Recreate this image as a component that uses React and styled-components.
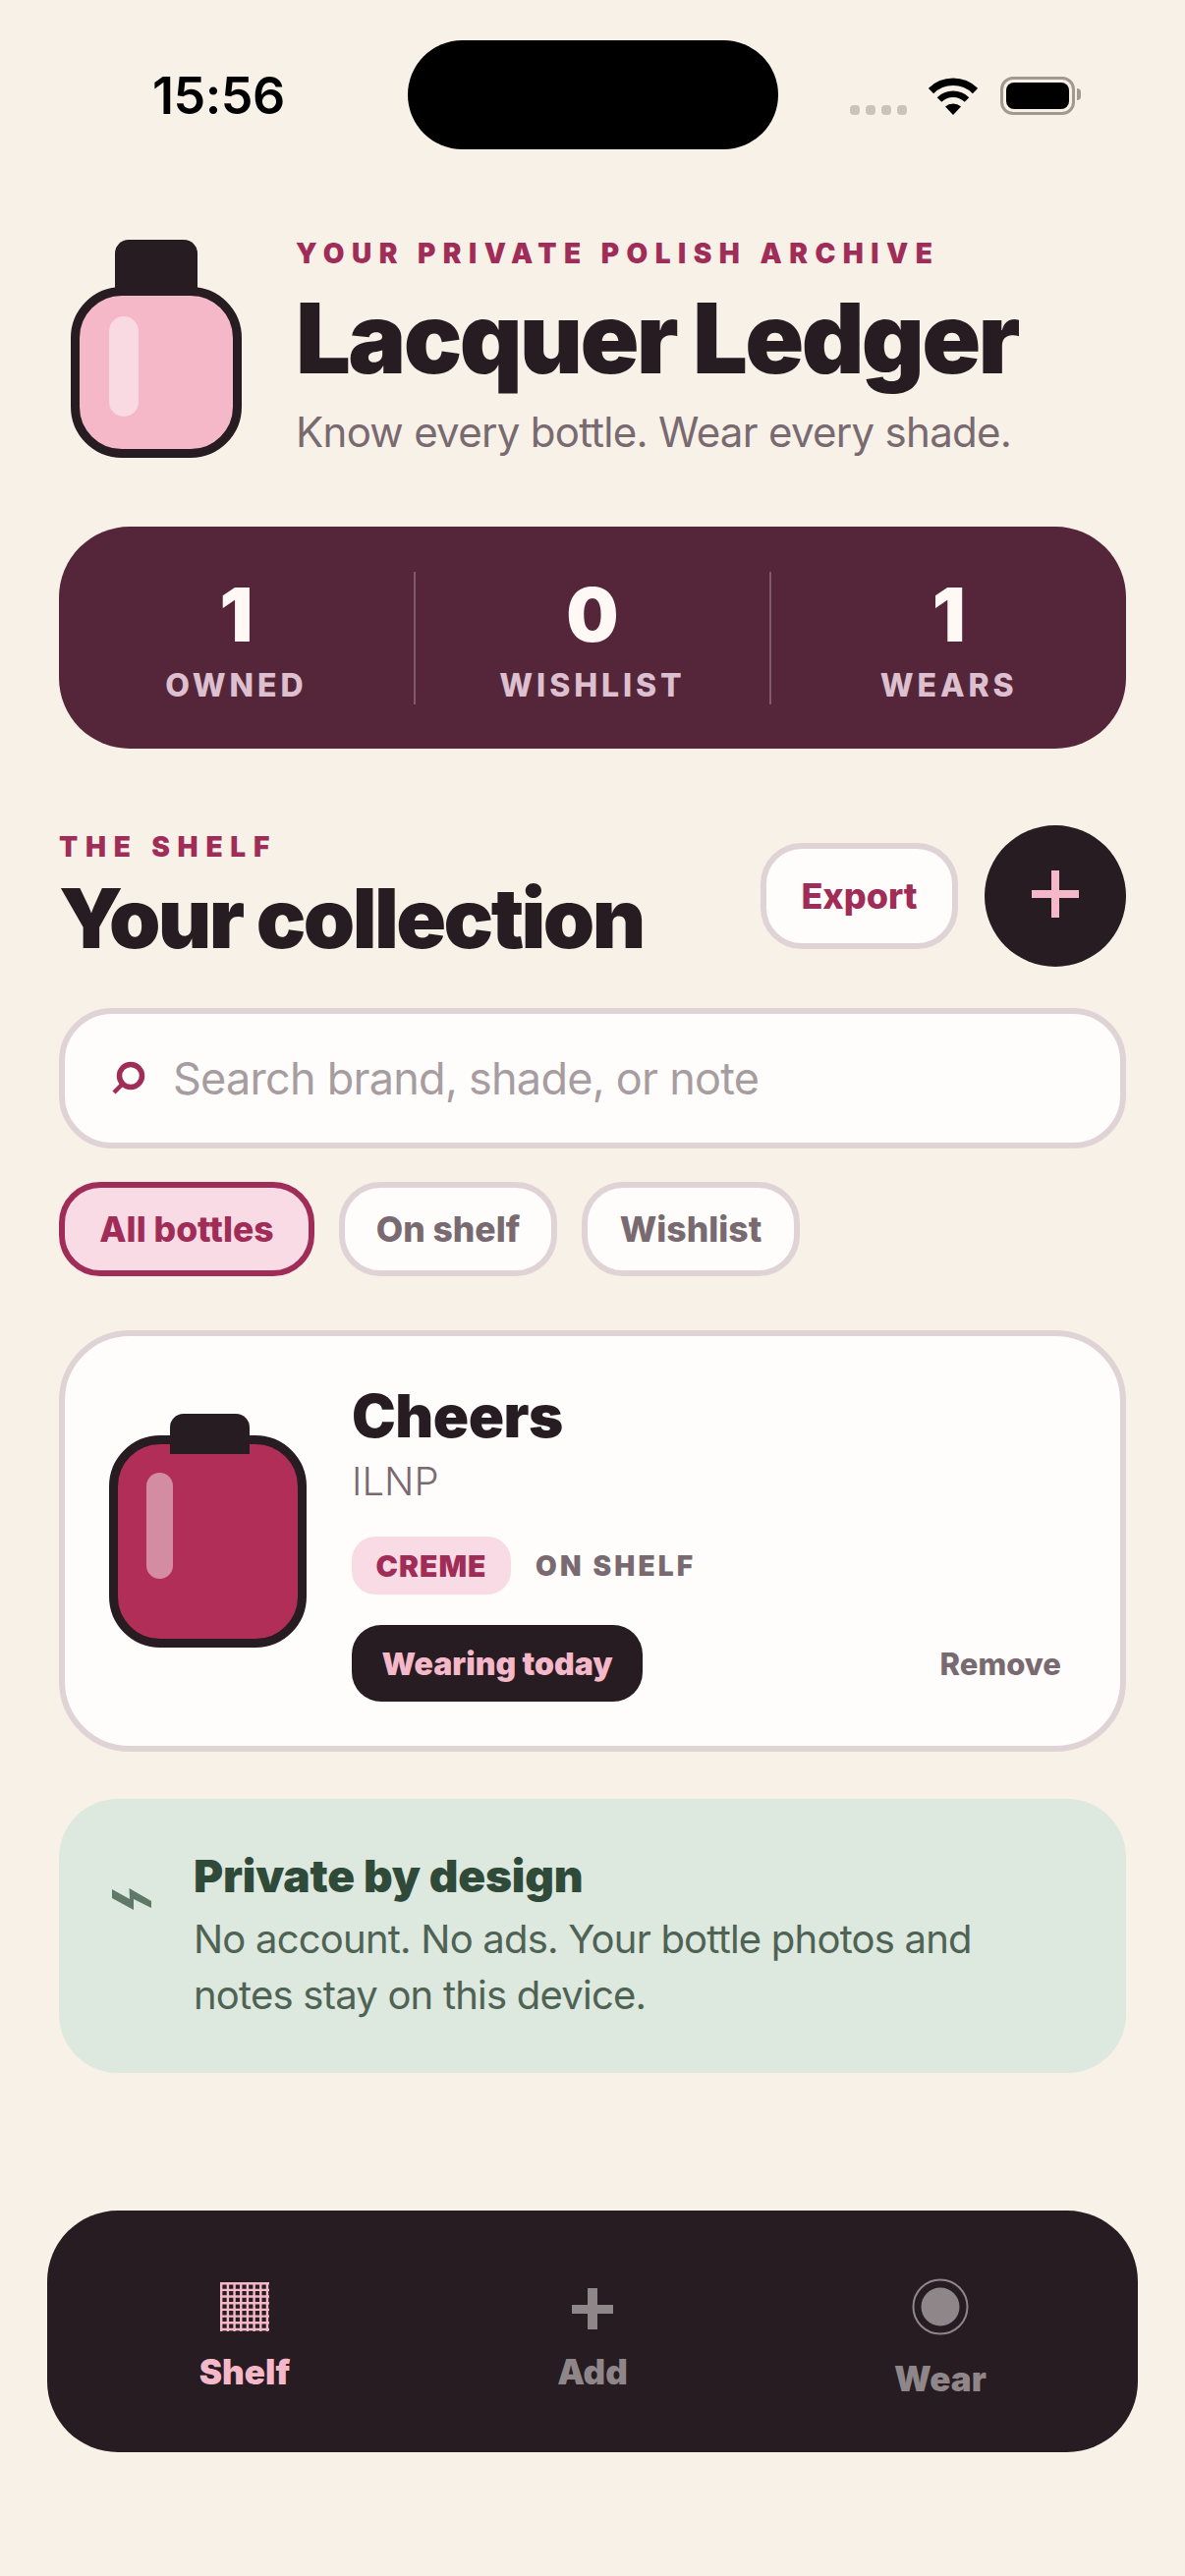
import React from 'react';
import styled, { createGlobalStyle } from 'styled-components';

const GlobalStyle = createGlobalStyle`
  html, body {
    margin: 0;
    padding: 0;
    background: #f8f1e7;
  }
  body {
    font-family: Inter, "Noto Sans", sans-serif;
    color: #261c21;
  }
`;

const Screen = styled.div`
  width: 1206px;
  height: 2622px;
  overflow: hidden;
  background: #f8f1e7;
`;

/* status bar */
const StatusBar = styled.div`
  display: grid;
  grid-template-columns: 1fr 377px 1fr;
  padding-top: 41px;
  height: 111px;
`;

const Time = styled.div`
  padding: 39px 0 0 155px;
  font-size: 52px;
  line-height: 36px;
  font-weight: 600;
  color: #000;
  letter-spacing: -0.5px;
`;

const Island = styled.div`
  background: #000;
  height: 111px;
  border-radius: 56px;
`;

const StatusIcons = styled.div`
  display: flex;
  align-items: flex-end;
  height: 76px;
  padding-left: 73px;
`;

const SignalDots = styled.div`
  display: flex;
  gap: 6px;
  margin-right: 22px;
`;

const SignalDot = styled.span`
  width: 10px;
  height: 10px;
  border-radius: 4px;
  background: #c9c4bc;
`;

const Battery = styled.div`
  position: relative;
  box-sizing: border-box;
  width: 76px;
  height: 39px;
  margin-left: 23px;
  padding: 3px;
  border: 3px solid #a09a90;
  border-radius: 13px;
  &::before {
    content: '';
    display: block;
    height: 100%;
    background: #000;
    border-radius: 8px;
  }
  &::after {
    content: '';
    position: absolute;
    right: -9px;
    top: 9px;
    width: 4px;
    height: 12px;
    background: #a09a90;
    border-radius: 0 4px 4px 0;
  }
`;

/* header */
const Content = styled.main`
  padding: 0 60px;
`;

const Header = styled.header`
  display: flex;
  gap: 55px;
  margin-top: 92px;
  padding-left: 12px;
`;

const BottleWrap = styled.div`
  position: relative;
  flex: none;
  box-sizing: border-box;
  width: ${(p) => p.$w}px;
  height: ${(p) => p.$h}px;
  padding-top: ${(p) => p.$capDrop}px;
`;

const BottleCap = styled.div`
  position: absolute;
  top: 0;
  left: ${(p) => p.$left}px;
  z-index: ${(p) => (p.$front ? 1 : 0)};
  width: ${(p) => p.$w}px;
  height: ${(p) => p.$h}px;
  background: #261c21;
  border-radius: ${(p) => p.$radius};
`;

const BottleBody = styled.div`
  position: relative;
  box-sizing: border-box;
  height: 100%;
  background: ${(p) => p.$color};
  border: 9px solid #261c21;
  border-radius: 52px;
`;

const BottleShine = styled.div`
  position: absolute;
  top: ${(p) => p.$top}px;
  left: ${(p) => p.$left}px;
  width: ${(p) => p.$w}px;
  height: ${(p) => p.$h}px;
  background: rgba(255, 255, 255, ${(p) => p.$alpha});
  border-radius: 20px;
`;

const Eyebrow = styled.div`
  font-size: 28px;
  line-height: 28px;
  font-weight: 900;
  letter-spacing: ${(p) => p.$spacing}px;
  color: #a02c58;
`;

const Title = styled.h1`
  margin: 22px 0 0;
  font-size: 99px;
  line-height: 100px;
  font-weight: 900;
  letter-spacing: -2.7px;
  white-space: nowrap;
`;

const Tagline = styled.p`
  margin: 21px 0 0;
  font-size: 42px;
  line-height: 50px;
  font-weight: 400;
  letter-spacing: -0.7px;
  color: #786a70;
  white-space: nowrap;
`;

/* stats */
const Stats = styled.section`
  display: flex;
  align-items: center;
  margin-top: 70px;
  height: 226px;
  background: #552539;
  border-radius: 72px;
`;

const Stat = styled.div`
  flex: 1;
  height: 135px;
  text-align: center;
  & + & {
    border-left: 2px solid rgba(255, 255, 255, 0.25);
  }
`;

const StatNumber = styled.div`
  padding-top: 5px;
  font-size: 75px;
  line-height: 78px;
  font-weight: 900;
  color: #fff8f4;
`;

const StatLabel = styled.div`
  margin-top: 15px;
  font-size: 32px;
  line-height: 36px;
  font-weight: 800;
  letter-spacing: 3.9px;
  color: #dcc0cf;
`;

/* section head */
const SectionHead = styled.section`
  display: flex;
  align-items: center;
  justify-content: space-between;
  margin-top: 78px;
`;

const SectionTitle = styled.h2`
  margin: 17px 0 0;
  font-size: 84px;
  line-height: 84px;
  font-weight: 900;
  letter-spacing: -2.6px;
  white-space: nowrap;
`;

const HeadActions = styled.div`
  display: flex;
  align-items: center;
  gap: 27px;
`;

const ExportButton = styled.button`
  box-sizing: border-box;
  width: 201px;
  height: 108px;
  padding: 0;
  background: #fffdfb;
  border: 6px solid #dfd3d6;
  border-radius: 42px;
  font-family: inherit;
  font-size: 36px;
  font-weight: 800;
  color: #a02c58;
`;

const AddButton = styled.button`
  display: flex;
  align-items: center;
  justify-content: center;
  width: 144px;
  height: 144px;
  padding: 0 0 4px;
  background: #261c21;
  border: 0;
  border-radius: 50%;
`;

/* search */
const Search = styled.div`
  box-sizing: border-box;
  display: flex;
  align-items: center;
  gap: 27px;
  height: 143px;
  margin-top: 42px;
  padding-left: 47px;
  background: #fffdfb;
  border: 6px solid #dfd3d6;
  border-radius: 54px;
`;

const SearchText = styled.span`
  font-size: 45px;
  font-weight: 400;
  letter-spacing: -0.75px;
  color: #a79ca0;
`;

/* filters */
const Filters = styled.div`
  display: flex;
  gap: 25px;
  margin-top: 34px;
`;

const Chip = styled.button`
  box-sizing: border-box;
  width: ${(p) => p.$w}px;
  height: 96px;
  padding: 0;
  background: ${(p) => (p.$active ? '#f8dbe5' : '#fffdfb')};
  border: 6px solid ${(p) => (p.$active ? '#a02c58' : '#dfd3d6')};
  border-radius: 42px;
  font-family: inherit;
  font-size: 35.5px;
  font-weight: 800;
  color: ${(p) => (p.$active ? '#a02c58' : '#786a70')};
`;

/* bottle card */
const Card = styled.article`
  box-sizing: border-box;
  display: flex;
  height: 429px;
  margin-top: 55px;
  padding: 0 60px 0 45px;
  background: #fffdfb;
  border: 6px solid #dfd3d6;
  border-radius: 72px;
`;

const CardArt = styled.div`
  padding-top: 79px;
`;

const CardInfo = styled.div`
  flex: 1;
  margin-left: 46px;
  padding-top: 49px;
`;

const CardName = styled.h3`
  margin: 0;
  font-size: 60px;
  line-height: 64px;
  font-weight: 900;
  letter-spacing: -0.5px;
`;

const CardBrand = styled.div`
  margin-top: 11px;
  font-size: 40px;
  line-height: 48px;
  font-weight: 300;
  color: #786a70;
`;

const TagRow = styled.div`
  display: flex;
  align-items: center;
  gap: 25px;
  margin-top: 32px;
`;

const Finish = styled.span`
  display: flex;
  align-items: center;
  justify-content: center;
  width: 162px;
  height: 59px;
  background: #f8dbe5;
  border-radius: 24px;
  font-size: 30px;
  font-weight: 900;
  letter-spacing: 1px;
  color: #a02c58;
`;

const ShelfState = styled.span`
  font-size: 28px;
  font-weight: 900;
  letter-spacing: 3.2px;
  color: #786a70;
`;

const ActionRow = styled.div`
  display: flex;
  align-items: center;
  justify-content: space-between;
  margin-top: 31px;
`;

const WearButton = styled.button`
  width: 296px;
  height: 78px;
  padding: 0;
  background: #261c21;
  border: 0;
  border-radius: 30px;
  font-family: inherit;
  font-size: 32px;
  font-weight: 900;
  color: #f4b8c8;
`;

const RemoveButton = styled.button`
  padding: 0;
  background: none;
  border: 0;
  font-family: inherit;
  font-size: 31px;
  font-weight: 800;
  color: #786a70;
`;

/* privacy note */
const Note = styled.aside`
  box-sizing: border-box;
  display: flex;
  height: 279px;
  margin-top: 48px;
  padding: 52px 0 0 54px;
  background: #dde8de;
  border-radius: 60px;
`;

const NoteIcon = styled.div`
  flex: none;
  width: 83px;
  padding-top: 38px;
`;

const NoteTitle = styled.div`
  font-size: 46px;
  line-height: 52px;
  font-weight: 900;
  letter-spacing: -0.2px;
  color: #2f4a39;
`;

const NoteBody = styled.p`
  margin: 10px 0 0;
  font-size: 40px;
  line-height: 57px;
  font-weight: 400;
  letter-spacing: -0.78px;
  color: #4f6354;
`;

/* bottom nav */
const BottomNav = styled.nav`
  display: grid;
  grid-template-columns: repeat(3, 354px);
  height: 246px;
  margin: 140px 48px 0;
  padding: 0 24px;
  box-sizing: border-box;
  background: #261c21;
  border-radius: 72px;
`;

const NavItem = styled.div`
  display: flex;
  flex-direction: column;
  align-items: center;
  padding-top: ${(p) => p.$top}px;
  color: ${(p) => (p.$active ? '#f4b8c8' : '#8f868a')};
`;

const NavLabel = styled.span`
  margin-top: ${(p) => p.$gap}px;
  font-size: 35px;
  line-height: 40px;
  font-weight: 900;
`;

const ShelfGlyph = () => {
  const ticks = [0, 1, 2, 3, 4, 5, 6, 7];
  return (
    <svg width="50" height="50" viewBox="0 0 50 50" stroke="currentColor" strokeWidth="2.4">
      {ticks.map((i) => (
        <React.Fragment key={i}>
          <line x1={1.2 + i * 6.68} y1="0" x2={1.2 + i * 6.68} y2="50" />
          <line x1="0" y1={1.2 + i * 6.68} x2="50" y2={1.2 + i * 6.68} />
        </React.Fragment>
      ))}
    </svg>
  );
};

const Wifi = () => (
  <svg width="50" height="38" viewBox="0 0 50 38" fill="none" stroke="#000">
    <path d="M2.5 13.5 A32 32 0 0 1 47.5 13.5" strokeWidth="7.5" />
    <path d="M11 22.5 A20 20 0 0 1 39 22.5" strokeWidth="6.5" />
    <path d="M25 38 L17 29.5 A12 12 0 0 1 33 29.5 Z" fill="#000" stroke="none" />
  </svg>
);

const App = () => (
  <Screen>
    <GlobalStyle />
    <StatusBar>
      <Time>15:56</Time>
      <Island />
      <StatusIcons>
        <SignalDots>
          <SignalDot />
          <SignalDot />
          <SignalDot />
          <SignalDot />
        </SignalDots>
        <Wifi />
        <Battery />
      </StatusIcons>
    </StatusBar>

    <Content>
      <Header>
        <BottleWrap $w={174} $h={222} $capDrop={48}>
          <BottleCap $left={45} $w={84} $h={58} $radius="14px 14px 8px 8px" />
          <BottleBody $color="#f4b8c8">
            <BottleShine $top={21} $left={30} $w={30} $h={102} $alpha={0.48} />
          </BottleBody>
        </BottleWrap>
        <div>
          <Eyebrow $spacing={7.5}>YOUR PRIVATE POLISH ARCHIVE</Eyebrow>
          <Title>Lacquer Ledger</Title>
          <Tagline>Know every bottle. Wear every shade.</Tagline>
        </div>
      </Header>

      <Stats>
        <Stat>
          <StatNumber>1</StatNumber>
          <StatLabel>OWNED</StatLabel>
        </Stat>
        <Stat>
          <StatNumber>0</StatNumber>
          <StatLabel>WISHLIST</StatLabel>
        </Stat>
        <Stat>
          <StatNumber>1</StatNumber>
          <StatLabel>WEARS</StatLabel>
        </Stat>
      </Stats>

      <SectionHead>
        <div>
          <Eyebrow $spacing={7.8}>THE SHELF</Eyebrow>
          <SectionTitle>Your collection</SectionTitle>
        </div>
        <HeadActions>
          <ExportButton>Export</ExportButton>
          <AddButton>
            <svg width="48" height="48" viewBox="0 0 48 48" fill="#f4b8c8">
              <rect x="20" y="0" width="8" height="48" />
              <rect x="0" y="20" width="48" height="8" />
            </svg>
          </AddButton>
        </HeadActions>
      </SectionHead>

      <Search>
        <svg width="36" height="36" viewBox="0 0 36 36" fill="none" stroke="#a02c58">
          <circle cx="20" cy="15" r="11.5" strokeWidth="5.5" />
          <line x1="12" y1="23" x2="3" y2="32" strokeWidth="4.5" />
        </svg>
        <SearchText>Search brand, shade, or note</SearchText>
      </Search>

      <Filters>
        <Chip $active $w={260}>All bottles</Chip>
        <Chip $w={222}>On shelf</Chip>
        <Chip $w={222}>Wishlist</Chip>
      </Filters>

      <Card>
        <CardArt>
          <BottleWrap $w={201} $h={238} $capDrop={22}>
            <BottleCap $front $left={62} $w={81} $h={41} $radius="14px 14px 0 0" />
            <BottleBody $color="#b12e58">
              <BottleShine $top={29} $left={29} $w={27} $h={108} $alpha={0.45} />
            </BottleBody>
          </BottleWrap>
        </CardArt>
        <CardInfo>
          <CardName>Cheers</CardName>
          <CardBrand>ILNP</CardBrand>
          <TagRow>
            <Finish>CREME</Finish>
            <ShelfState>ON SHELF</ShelfState>
          </TagRow>
          <ActionRow>
            <WearButton>Wearing today</WearButton>
            <RemoveButton>Remove</RemoveButton>
          </ActionRow>
        </CardInfo>
      </Card>

      <Note>
        <NoteIcon>
          <svg width="40" height="24" viewBox="0 0 40 24" fill="#5e7a66">
            <polygon points="0,2 18,12 17.5,1 40,14 40,21 22,12 22,23 0,11" />
          </svg>
        </NoteIcon>
        <div>
          <NoteTitle>Private by design</NoteTitle>
          <NoteBody>
            No account. No ads. Your bottle photos and
            <br />
            notes stay on this device.
          </NoteBody>
        </div>
      </Note>
    </Content>

    <BottomNav>
      <NavItem $active $top={73}>
        <ShelfGlyph />
        <NavLabel $gap={21}>Shelf</NavLabel>
      </NavItem>
      <NavItem $top={79}>
        <svg width="42" height="42" viewBox="0 0 42 42" fill="currentColor">
          <rect x="16" y="0" width="10" height="42" />
          <rect x="0" y="17" width="42" height="9" />
        </svg>
        <NavLabel $gap={23}>Add</NavLabel>
      </NavItem>
      <NavItem $top={69}>
        <svg width="58" height="58" viewBox="0 0 58 58" fill="currentColor">
          <circle cx="29" cy="29" r="27.5" fill="none" stroke="currentColor" strokeWidth="2" />
          <circle cx="29" cy="29" r="19.5" />
        </svg>
        <NavLabel $gap={24}>Wear</NavLabel>
      </NavItem>
    </BottomNav>
  </Screen>
);

export default App;
